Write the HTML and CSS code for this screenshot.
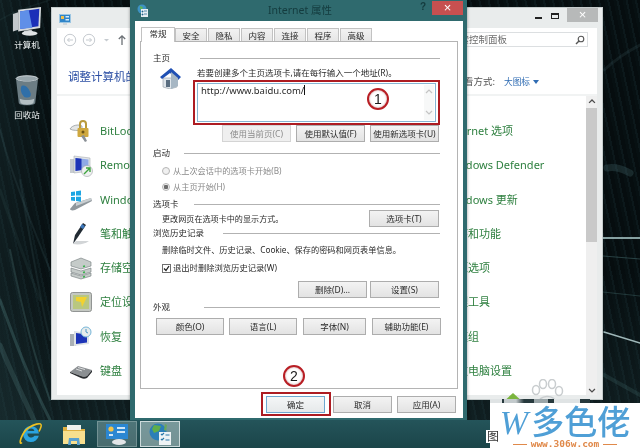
FILE: index.html
```html
<!DOCTYPE html>
<html lang="zh-CN">
<head>
<meta charset="utf-8">
<title>Internet 属性</title>
<link rel="stylesheet" href="styles.css">
</head>
<body>
<div class="desktop">
  <svg class="wallpaper" viewBox="0 0 640 448" aria-hidden="true">
    <g fill="none" stroke="#5b8a8c" stroke-linecap="round">
      <path d="M0 300C15 340 25 370 50 420" stroke-width="3" opacity=".3"/>
      <path d="M0 345C10 370 22 395 34 420" stroke-width="5" opacity=".24"/>
      <path d="M10 250C20 300 35 360 50 400" stroke-width="2" opacity=".25"/>
      <path d="M20 180C30 240 40 300 50 340" stroke-width="2" opacity=".14"/>
      <path d="M0 130C10 170 30 220 50 270" stroke-width="2" opacity=".14"/>
      <path d="M0 190C10 220 25 260 40 300" stroke-width="3" opacity=".1"/>
      <path d="M0 20C15 10 35 5 50 0" stroke-width="1.5" opacity=".1"/>
      <path d="M603 238H640" stroke="#a6c6c6" stroke-width="2" opacity=".8"/>
      <path d="M603 256L640 259" stroke-width="1" opacity=".4"/>
      <path d="M603 292L640 296" stroke-width="1" opacity=".3"/>
      <path d="M604 332L640 343" stroke="#b9d2d4" stroke-width="1.5" opacity=".85"/>
      <path d="M607 168C615 166 625 170 630 173" stroke-width="7" opacity=".22"/>
      <path d="M604 70C615 60 630 50 640 45" stroke-width="3" opacity=".14"/>
      <path d="M604 375L640 395" stroke-width="4" opacity=".18"/>
    </g>
  </svg>

  <div class="shortcut shortcut-computer">
    <svg width="30" height="29" viewBox="0 0 34 33" aria-hidden="true">
      <path d="M1 8l6-2v20l-6 2z" fill="#c3c8cc"/>
      <path d="M7 3l26-3-1 24-25 4z" fill="#d4d8db"/>
      <path d="M9 5l22-3-1 20-21 3z" fill="#1b2fb8"/>
      <path d="M9 5l10-1.500 4 20-14 1.500z" fill="#5f8fe8"/>
      <path d="M14 27l8-1 3 4H12z" fill="#c6cacd"/>
      <ellipse cx="20" cy="30" rx="9" ry="2.600" fill="#dfe2e4"/>
    </svg>
    <span>计算机</span>
  </div>
  <div class="shortcut shortcut-bin">
    <svg width="26" height="31" viewBox="0 0 28 34" aria-hidden="true">
      <ellipse cx="14" cy="4" rx="12" ry="3.200" fill="#98a6ac" stroke="#d7dde0"/>
      <path d="M2 5l3 26c2 3 16 3 18 0l3-26c-4 3-20 3-24 0z" fill="#6c7d84"/>
      <path d="M8 12c5-2 8 3 10 8 1 4-2 6-7 4-3-3-5-8-3-12z" fill="#2f6fa8"/>
      <path d="M6 26c4 2 12 2 16 0l-1 5c-3 2-11 2-14 0z" fill="#b5c0c4"/>
    </svg>
    <span>回收站</span>
  </div>

  <section class="panel-window">
    <header class="panel-title">
      <svg class="panel-title-icon" width="12" height="11" viewBox="0 0 12 11" aria-hidden="true">
        <rect x=".5" y=".5" width="11" height="8" fill="#2f85c9" stroke="#9cc6e2"/>
        <rect x="2" y="2" width="3" height="3" fill="#f2c14e"/>
        <rect x="6.500" y="2" width="3.500" height="1.500" fill="#d8ecf8"/>
        <rect x="6.500" y="5" width="3.500" height="1.500" fill="#d8ecf8"/>
        <path d="M4 9h4v2H4z" fill="#cfd6da"/>
      </svg>
      <div class="window-controls">
        <span class="ctl-min"></span>
        <span class="ctl-max"></span>
        <span class="ctl-close">×</span>
      </div>
    </header>
    <div class="panel-client">
      <div class="address-row">
        <svg class="nav-icons" width="68" height="14" viewBox="0 0 68 14" aria-hidden="true">
          <g fill="none" stroke="#c6cbd0">
            <circle cx="7" cy="7" r="5.700"/>
            <circle cx="26" cy="7" r="5.700"/>
            <path d="M10 7H4.500M6.500 5L4.500 7l2 2M23 7h5.500M26.500 5l2 2-2 2"/>
          </g>
          <path d="M41 6h5l-2.500 2.500z" fill="#c6cbd0"/>
          <path d="M59 12V3M55.800 6L59 2.800 62.200 6" fill="none" stroke="#6c7176" stroke-width="1.300"/>
        </svg>
        <div class="search-box">
          <span>搜索控制面板</span>
          <svg width="10" height="10" viewBox="0 0 10 10" aria-hidden="true">
            <circle cx="6" cy="4" r="2.800" fill="none" stroke="#555" stroke-width="1.100"/>
            <path d="M4 6L1 9" stroke="#555" stroke-width="1.400"/>
          </svg>
        </div>
      </div>
      <div class="heading-row">
        <h1>调整计算机的设置</h1>
        <div class="view-mode">查看方式:<b>大图标</b><i></i></div>
      </div>
      <div class="panel-body">
        <div class="item-grid">
          <div class="item">
            <svg width="24" height="24" viewBox="0 0 24 24" aria-hidden="true">
              <path d="M1 10c2-4 9-5 12-3v5c-4-1-9 0-12-2z" fill="#e4e6e6" stroke="#8b9094" stroke-width=".7"/>
              <path d="M10 5a4 4 0 0 1 8 0v5h-2V5a2 2 0 0 0-4 0v5h-2z" fill="#b99a3d"/>
              <rect x="8.500" y="9" width="11" height="9" rx="1" fill="#cfa83f"/>
              <path d="M12 17l4 6 2-1-3-6z" fill="#8a9096"/>
              <circle cx="14" cy="13" r="1.500" fill="#6d5516"/>
            </svg>
            <span>BitLocker 驱动器加密</span>
          </div>
          <div class="item"><span>Internet 选项</span></div>
          <div class="item">
            <svg width="24" height="24" viewBox="0 0 24 24" aria-hidden="true">
              <rect x="1" y="6" width="6" height="14" fill="#c7ccd0"/>
              <path d="M5 3l16 2v13l-16 2z" fill="#e2e5e8" stroke="#a9afb4" stroke-width=".6"/>
              <path d="M6.500 5l13 1.500V16l-13 2z" fill="#8fa9e6"/>
              <path d="M6.500 5l6 .7V17l-6 1z" fill="#1d34b7"/>
              <circle cx="18" cy="18" r="5.500" fill="#eef0f0" stroke="#9da3a8" stroke-width=".6"/>
              <path d="M15 21l6-6M17 15h4v4" fill="none" stroke="#3da33d" stroke-width="1.400"/>
            </svg>
            <span>RemoteApp 和桌面连接</span>
          </div>
          <div class="item"><span>Windows Defender</span></div>
          <div class="item">
            <svg width="24" height="24" viewBox="0 0 24 24" aria-hidden="true">
              <path d="M1 21l5-6 16-5 1 3-17 9c-3 1-5 0-5-1z" fill="#8f979c"/>
              <path d="M7 15l15-5 1 2-16 6z" fill="#c9cfd2"/>
              <path d="M2 4l4-.6v4L2 8zM7 3.200l5-.7v5L7 7.500zM2 9l4 0v4l-4-.5zM7 8.700h5v5l-5-.7z" fill="#1ea6e3"/>
            </svg>
            <span>Windows To Go</span>
          </div>
          <div class="item"><span>Windows 更新</span></div>
          <div class="item">
            <svg width="24" height="24" viewBox="0 0 24 24" aria-hidden="true">
              <path d="M4 22l2-9 8-12 3 2-8 12z" fill="#222b33"/>
              <path d="M13 2l3 2-2 3-3-2z" fill="#3d78bc"/>
              <path d="M4 22l3-3 13 0c-4 3-10 4-16 3z" fill="#bfc3c6" opacity=".7"/>
            </svg>
            <span>笔和触摸</span>
          </div>
          <div class="item"><span>程序和功能</span></div>
          <div class="item">
            <svg width="24" height="24" viewBox="0 0 24 24" aria-hidden="true">
              <g fill="#c5cbc9" stroke="#70787a" stroke-width=".6">
                <path d="M2 6l10-4 10 4v4l-10 3-10-3z"/>
                <path d="M2 12l10 3 10-3v4l-10 3-10-3z"/>
                <path d="M2 17l10 3 10-3v3l-10 3-10-3z"/>
              </g>
              <path d="M14 10.500l2-.5M14 16.500l2-.5M14 21l2-.5" stroke="#36b24a" stroke-width="1.500"/>
            </svg>
            <span>存储空间</span>
          </div>
          <div class="item"><span>电源选项</span></div>
          <div class="item">
            <svg width="24" height="24" viewBox="0 0 24 24" aria-hidden="true">
              <rect x="1.500" y="2.500" width="21" height="19" rx="2" fill="#c4c8c2" stroke="#7d8280" stroke-width=".8"/>
              <rect x="4" y="5" width="16" height="14" fill="#b9c780"/>
              <path d="M7 7h11l-5 10-1-5-5-1z" fill="#f2d230"/>
            </svg>
            <span>定位设置</span>
          </div>
          <div class="item"><span>管理工具</span></div>
          <div class="item">
            <svg width="24" height="24" viewBox="0 0 24 24" aria-hidden="true">
              <rect x="1" y="9" width="6" height="12" fill="#aab0b5"/>
              <path d="M5 6l15 2v11L5 21z" fill="#dfe3e6"/>
              <path d="M7 8l11 1.500v8L7 19z" fill="#1d34b7"/>
              <circle cx="17" cy="7" r="5" fill="#e7ecec" stroke="#77b6d9"/>
              <path d="M17 4v3l2 1" fill="none" stroke="#4d97c4"/>
            </svg>
            <span>恢复</span>
          </div>
          <div class="item"><span>家庭组</span></div>
          <div class="item">
            <svg width="24" height="24" viewBox="0 0 24 24" aria-hidden="true">
              <path d="M1 13l8-6 14 4-5 6c-2 1-4 1-6 0z" fill="#8b8f92"/>
              <path d="M1 13l11 4c2 1 4 1 6 0l5-6v2l-5 6c-2 1-4 1-6 0L1 14z" fill="#2a2d30"/>
              <path d="M7 10l6 2M9 8.500l7 2" stroke="#d8dadb" stroke-width="1"/>
            </svg>
            <span>键盘</span>
          </div>
          <div class="item"><span>更改电脑设置</span></div>
        </div>
        <div class="scrollbar">
          <svg width="10" height="10" viewBox="0 0 10 10" aria-hidden="true"><path d="M2 6l3-3 3 3" fill="none" stroke="#4d4d4d" stroke-width="1.300"/></svg>
          <div class="scroll-thumb"></div>
          <svg width="10" height="10" viewBox="0 0 10 10" aria-hidden="true"><path d="M2 4l3 3 3-3" fill="none" stroke="#4d4d4d" stroke-width="1.300"/></svg>
        </div>
      </div>
    </div>
  </section>

  <section class="dialog">
    <header class="dialog-title">
      <svg class="dialog-icon" width="11" height="13" viewBox="0 0 11 13" aria-hidden="true">
        <circle cx="5" cy="5" r="4.500" fill="#3d92c4"/>
        <path d="M3 2l3 1-1 3-2-1z" fill="#5bb35a"/>
        <rect x="4" y="5" width="7" height="8" fill="#e6eef2"/>
        <path d="M5 7h1v1H5zM5 10h1v1H5zM7 7h3M7 10h3" stroke="#2e6f99" stroke-width=".8"/>
      </svg>
      <span class="dialog-name">Internet 属性</span>
      <span class="dialog-help">?</span>
      <span class="dialog-close">×</span>
    </header>
    <div class="dialog-client">
      <nav class="tabs">
        <span class="tab tab-active">常规</span>
        <span class="tab">安全</span>
        <span class="tab">隐私</span>
        <span class="tab">内容</span>
        <span class="tab">连接</span>
        <span class="tab">程序</span>
        <span class="tab">高级</span>
      </nav>
      <div class="tab-panel">
        <div class="group-head gap-home"><span>主页</span><i></i></div>
        <div class="home-section">
          <svg class="home-icon" width="22" height="21" viewBox="0 0 22 21" aria-hidden="true">
            <path d="M3 10h14v9l-7 2-7-2z" fill="#dfe5ea" stroke="#7d8790" stroke-width=".5"/>
            <path d="M11 0l10 9-3 3-8-7-8 6-2-2z" fill="#2050b4"/>
            <path d="M11 4l7 6v8l-7 3z" fill="#a7b7c4"/>
            <rect x="6" y="12" width="4" height="7" fill="#5a6d80"/>
          </svg>
          <div class="home-main">
            <p class="home-text">若要创建多个主页选项卡,请在每行输入一个地址(R)。</p>
            <div class="highlight highlight-url">
              <div class="url-box">
                <span class="url-text">http://www.baidu.com/</span>
                <div class="url-scroll">
                  <svg width="8" height="6" viewBox="0 0 8 6" aria-hidden="true"><path d="M1 5l3-3 3 3" fill="none" stroke="#c4c4c4" stroke-width="1.200"/></svg>
                  <svg width="8" height="6" viewBox="0 0 8 6" aria-hidden="true"><path d="M1 1l3 3 3-3" fill="none" stroke="#c4c4c4" stroke-width="1.200"/></svg>
                </div>
              </div>
              <span class="callout callout-one">1</span>
            </div>
            <div class="btn-row home-buttons">
              <button class="btn btn-disabled">使用当前页(C)</button>
              <button class="btn">使用默认值(F)</button>
              <button class="btn">使用新选项卡(U)</button>
            </div>
          </div>
        </div>

        <div class="group-head gap-start"><span>启动</span><i></i></div>
        <div class="radio-list">
          <label class="radio-row"><i class="radio"></i>从上次会话中的选项卡开始(B)</label>
          <label class="radio-row"><i class="radio radio-on"></i>从主页开始(H)</label>
        </div>

        <div class="group-head gap-tabs"><span>选项卡</span><i></i></div>
        <div class="tab-row">
          <p>更改网页在选项卡中的显示方式。</p>
          <button class="btn btn-tab">选项卡(T)</button>
        </div>

        <div class="group-head gap-history"><span>浏览历史记录</span><i></i></div>
        <p class="history-text">删除临时文件、历史记录、Cookie、保存的密码和网页表单信息。</p>
        <label class="check-row">
          <svg width="9" height="9" viewBox="0 0 9 9" aria-hidden="true">
            <rect x=".5" y=".5" width="8" height="8" fill="#fff" stroke="#6f6f6f"/>
            <path d="M2 4.500l2 2L7 2" fill="none" stroke="#222" stroke-width="1.300"/>
          </svg>
          退出时删除浏览历史记录(W)
        </label>
        <div class="btn-row history-buttons">
          <button class="btn">删除(D)...</button>
          <button class="btn">设置(S)</button>
        </div>

        <div class="group-head gap-look"><span>外观</span><i></i></div>
        <div class="look-buttons">
          <button class="btn btn-look">颜色(O)</button>
          <button class="btn btn-look">语言(L)</button>
          <button class="btn btn-short">字体(N)</button>
          <button class="btn">辅助功能(E)</button>
        </div>
      </div>
      <footer class="dialog-foot">
        <div class="highlight highlight-ok">
          <button class="btn btn-wide btn-default">确定</button>
          <span class="callout callout-two">2</span>
        </div>
        <button class="btn btn-wide">取消</button>
        <button class="btn btn-wide">应用(A)</button>
      </footer>
    </div>
  </section>

  <footer class="taskbar">
    <div class="task-item task-plain">
      <svg width="24" height="24" viewBox="0 0 24 23" aria-hidden="true">
        <path d="M4 12a8 8 0 0 1 16-1H8.500a3.800 3.800 0 0 0 7 2.300h4.300A8 8 0 0 1 4 12zM8.800 8.500h6.700a3.500 3.500 0 0 0-6.700 0z" fill="#2aa3e0" fill-rule="evenodd"/>
        <path d="M3 20C-1 24 2 10 10 5c5-3 11-5 12-3 1 1-1 5-2 7" fill="none" stroke="#f0c020" stroke-width="1.600"/>
      </svg>
    </div>
    <div class="task-item task-plain">
      <svg width="24" height="23" viewBox="0 0 24 23" aria-hidden="true">
        <path d="M1 4h8l2 2h12v15H1z" fill="#e0b040"/>
        <path d="M1 8h22v13H1z" fill="#f8df8e"/>
        <path d="M5 2h14v5H5z" fill="#eef1ee"/>
        <path d="M6 22l1-7h10l1 7h-3v-4H9v4z" fill="#5aa0cf"/>
      </svg>
    </div>
    <div class="task-item task-open">
      <svg width="24" height="22" viewBox="0 0 24 22" aria-hidden="true">
        <rect x="1" y="1" width="22" height="15" fill="#2b87d2"/>
        <circle cx="6" cy="6" r="2.600" fill="#f3c44b"/>
        <path d="M12 4h8v2h-8zM12 8h8v2h-8zM4 11h4v2H4z" fill="#cfe6f6"/>
        <ellipse cx="14" cy="19" rx="7" ry="3" fill="#e3e6e8"/>
      </svg>
    </div>
    <div class="task-item task-active">
      <svg width="24" height="23" viewBox="0 0 24 23" aria-hidden="true">
        <circle cx="10" cy="9" r="8.500" fill="#2c7fb8"/>
        <path d="M6 2l7 1-2 5-5 2-2-4z" fill="#5fae4b"/>
        <path d="M17 1l2 1-1 6-2-1z" fill="#6aa95a"/>
        <rect x="11" y="9" width="12" height="13" fill="#eef3f5"/>
        <path d="M13 11l1 1 2-2M13 16l1 1 2-2M17.500 12h4M17.500 17h4" fill="none" stroke="#2877a8" stroke-width="1.200"/>
      </svg>
    </div>
  </footer>

  <div class="watermark">
    <svg class="paw" width="36" height="26" viewBox="0 0 36 26" aria-hidden="true">
      <g fill="none" stroke="#c9cdcf" stroke-width="1.500">
        <ellipse cx="8" cy="11" rx="3.500" ry="4.500"/>
        <ellipse cx="15" cy="5" rx="3.500" ry="4.500"/>
        <ellipse cx="24" cy="5" rx="3.500" ry="4.500"/>
        <ellipse cx="31" cy="12" rx="3.500" ry="4.500"/>
        <path d="M10 24c2-8 15-9 18-1v3H10z"/>
      </g>
    </svg>
    <i class="wm-tri"></i>
    <i class="wm-strip"></i>
    <div class="wm-card">
      <div class="wm-name"><span class="wm-w">W</span>多色佬</div>
      <div class="wm-url"><i></i>www.306w.com<i></i></div>
    </div>
    <span class="wm-tag">图</span>
  </div>
</div>
</body>
</html>
```

FILE: styles.css
```css
* { box-sizing: border-box; }
html, body { margin: 0; padding: 0; }
body { width: 640px; height: 448px; overflow: hidden; background: #060d0f; }
p, h1 { margin: 0; font-weight: normal; }
button { font: inherit; padding: 0; }

.desktop {
  position: relative;
  width: 640px;
  height: 448px;
  overflow: hidden;
  font-family: "Noto Sans", "Noto Sans CJK SC", sans-serif;
  font-size: 8.5px;
  line-height: 12px;
  color: #2b2b2b;
  background:
    linear-gradient(180deg, rgba(10, 20, 22, 0) 60%, rgba(44, 78, 82, .3) 100%),
    linear-gradient(90deg, rgba(40, 70, 74, .28), rgba(0, 0, 0, 0) 55px),
    repeating-linear-gradient(78deg, #071012 0 3px, #0c181b 3px 5px, #060d0f 5px 9px);
  filter: blur(.35px);
}
.wallpaper { position: absolute; inset: 0; width: 640px; height: 448px; }

.shortcut {
  position: absolute;
  left: 5px;
  width: 44px;
  display: flex;
  flex-direction: column;
  align-items: center;
  color: #eef2f2;
  font-size: 8.5px;
  line-height: 12px;
  gap: 3px;
}
.shortcut-computer { top: 7px; }
.shortcut-bin { top: 75px; gap: 3px; }

/* control panel window */
.panel-window {
  position: absolute;
  left: 51px;
  top: 7px;
  width: 552px;
  height: 393px;
  background: #e9ecec;
  border: 1px solid #c5cbcb;
  display: flex;
  flex-direction: column;
}
.panel-title { height: 20px; display: flex; justify-content: space-between; flex: none; }
.panel-title-icon { margin: 6px 0 0 7px; }
.window-controls { display: flex; align-items: flex-start; margin-right: 4px; }
.ctl-min { width: 7px; height: 2px; margin: 9px 9px 0 0; background: #222; }
.ctl-max { width: 8px; height: 6px; margin: 5px 8px 0 0; border: 1px solid #222; border-top-width: 2px; }
.ctl-close {
  width: 31px;
  height: 14px;
  background: #b7b9b9;
  color: #fff;
  text-align: center;
  font: 13px/13px "Liberation Sans", sans-serif;
}
.panel-client {
  flex: 1;
  margin: 0 5px 4px;
  background: #fff;
  display: flex;
  flex-direction: column;
  min-height: 0;
}
.address-row { height: 28px; display: flex; justify-content: space-between; align-items: center; padding: 0 9px 5px 6px; flex: none; }
.search-box {
  width: 150px;
  height: 15px;
  border: 1px solid #dcdfe1;
  display: flex;
  align-items: center;
  justify-content: space-between;
  padding: 0 2px 0 11px;
  font-size: 9.5px;
  color: #6d6d6d;
}
.heading-row { height: 40px; display: flex; justify-content: space-between; padding: 13px 58px 0 11px; flex: none; border-bottom: 2px solid #f1f3f3; }
h1 { font-size: 11.5px; line-height: 16px; color: #2b4ea3; }
.view-mode { font-size: 9.5px; line-height: 16px; color: #555; display: flex; align-items: center; }
.view-mode b { font-weight: normal; font-size: 8.7px; color: #2f6cb3; margin-left: 9px; }
.view-mode i { border: 3px solid transparent; border-top: 4px solid #2f6cb3; border-bottom: 0; margin-left: 3px; }
.panel-body { flex: 1; display: flex; min-height: 0; }
.item-grid {
  flex: 1;
  display: grid;
  grid-template-columns: 377px 1fr;
  grid-auto-rows: 34.3px;
  padding: 18px 0 0 12px;
}
.item { display: flex; align-items: center; gap: 7px; height: 34px; font-size: 11px; line-height: 14px; color: #2f8040; white-space: nowrap; }
.scrollbar {
  width: 11px;
  flex: none;
  background: #efefef;
  display: flex;
  flex-direction: column;
  align-items: center;
  padding-top: 1px;
}
.scroll-thumb { width: 11px; height: 137px; margin: 1px 0 143px; background: #c9c9c9; }

/* dialog */
.dialog {
  position: absolute;
  left: 130px;
  top: 0;
  width: 337px;
  height: 423px;
  background: #2f6a6e;
  display: flex;
  flex-direction: column;
  box-shadow: 0 0 3px rgba(0, 0, 0, .4);
}
.dialog-title { position: relative; height: 21px; flex: none; display: flex; align-items: flex-start; }
.dialog-icon { margin: 4px 0 0 7px; }
.dialog-name {
  position: absolute;
  left: 138px;
  top: 3px;
  font-size: 10.5px;
  line-height: 14px;
  color: #143b3e;
}
.dialog-help { position: absolute; left: 290px; top: 1px; font: bold 10px/12px "Liberation Sans", sans-serif; color: #143b3e; }
.dialog-close {
  position: absolute;
  left: 302px;
  top: 1px;
  width: 31px;
  height: 14px;
  background: #c75050;
  color: #fff;
  text-align: center;
  font: 13px/14px "Liberation Sans", sans-serif;
}
.dialog-client {
  flex: none;
  height: 397px;
  margin: 0 4px 0 5px;
  padding: 6px 5px 0 5px;
  display: flex;
  flex-direction: column;
  background: #fff;
}
.tabs { display: flex; height: 14px; flex: none; padding-left: 1px; align-items: flex-end; gap: 1px; position: relative; z-index: 1; }
.tab {
  width: 32px;
  height: 13px;
  border: 1px solid #c2c2c2;
  border-bottom: 0;
  background: linear-gradient(#f2f2f2, #e6e6e6);
  text-align: center;
  line-height: 13px;
}
.tab-active { width: 34px; height: 15px; margin-bottom: -1px; margin-right: -1px; background: #fff; line-height: 12px; }
.tab-panel {
  height: 348px;
  flex: none;
  border: 1px solid #b4b4b4;
  padding: 10px 17px 0 12px;
}
.group-head { display: flex; align-items: center; height: 12px; line-height: 12px; }
.group-head i { flex: 1; height: 1px; background: #b2b2b2; }
.gap-home span { margin-right: 30px; }
.gap-start { margin-top: 5px; }
.gap-start span { margin-right: 14px; }
.gap-tabs { margin-top: 3px; }
.gap-tabs span { margin-right: 15px; }
.gap-history span { margin-right: 19px; }
.gap-look { margin-top: 3px; }
.gap-look span { margin-right: 34px; }

.home-section { display: flex; margin-top: 2px; margin-left: 7px; }
.home-icon { flex: none; margin: 2px 11px 0 0; }
.home-main { width: 248px; }
.home-text { height: 14px; line-height: 14px; padding-left: 4px; white-space: nowrap; }
.highlight { position: relative; border: 2px solid #ad1c22; }
.highlight-url { height: 45px; padding: 1px 2px; }
.url-box {
  height: 39px;
  border: 1px solid #85b5d2;
  background: #fff;
  display: flex;
  justify-content: space-between;
  padding: 1px 1px 1px 3px;
}
.url-text { font-size: 9.5px; line-height: 12px; }
.url-text::after { content: ""; display: inline-block; width: 1px; height: 10px; background: #111; vertical-align: -1px; }
.url-scroll { width: 10px; display: flex; flex-direction: column; justify-content: space-between; align-items: center; padding: 3px 0 4px; background: #f7f8f8; }
.callout {
  position: absolute;
  width: 22px;
  height: 22px;
  border-radius: 50%;
  background: #fff;
  border: 2px solid #b81e24;
  box-shadow: inset 0 0 2px rgba(120, 0, 0, .5);
  color: #1a1a1a;
  font: 14px/18px "Liberation Sans", sans-serif;
  text-align: center;
}
.callout-one { left: 172px; top: 6px; }
.callout-two { left: 20px; top: -29px; }

.btn {
  width: 69px;
  height: 17px;
  border: 1px solid #adadad;
  background: linear-gradient(#f3f3f3, #e3e3e3);
  color: #2b2b2b;
  line-height: 14px;
  text-align: center;
  white-space: nowrap;
  font-size: 8.5px;
}
.btn-disabled { background: #efefef; border-color: #d4d4d4; color: #8c8c8c; }
.btn-row { display: flex; justify-content: flex-end; gap: 5px; padding-right: 1px; }
.radio-list { margin-top: 4px; padding-left: 9px; color: #8a8a8a; font-size: 8.2px; }
.radio-row { display: flex; align-items: center; height: 16px; gap: 3px; }
.radio { width: 8px; height: 8px; border-radius: 50%; border: 1px solid #b5b5b5; background: #f0f0f0; flex: none; }
.radio-on { background: radial-gradient(circle, #6d6d6d 0 2px, #f0f0f0 2.5px); }
.tab-row { display: flex; justify-content: space-between; align-items: center; height: 17px; padding-left: 9px; font-size: 8.1px; }
.tab-row p { line-height: 12px; margin-top: 1px; }
.btn-tab { width: 70px; margin-right: 1px; }
.history-text { height: 14px; line-height: 14px; margin-top: 4px; padding-left: 9px; white-space: nowrap; font-size: 8.2px; }
.check-row { display: flex; align-items: center; gap: 2px; height: 14px; margin-top: 4px; padding-left: 9px; font-size: 8.3px; }
.history-buttons { margin-top: 6px; gap: 3px; }
.look-buttons { display: flex; gap: 5px; margin-top: 5px; padding-left: 3px; margin-right: -2px; }
.btn-look { width: 68px; }
.btn-short { width: 63px; margin-left: 1px; margin-right: 1px; }
.dialog-foot { flex: 1; display: flex; align-items: flex-start; gap: 5px; padding: 3px 2px 0 123px; margin: 0 -2px; }
.highlight-ok { width: 70px; height: 24px; padding: 2px 3px; margin-right: -3px; flex: none; }
.btn-wide { width: 59px; margin-top: 4px; flex: none; }
.highlight-ok .btn-wide { margin-top: 0; }
.btn-default { border-color: #6fa8d0; background: linear-gradient(#f4f6f7, #e6e9ea); }

/* taskbar */
.taskbar {
  position: absolute;
  left: 0;
  right: 0;
  bottom: 0;
  height: 28px;
  padding-left: 11px;
  background: linear-gradient(180deg, #24545a, #1b4549);
  display: flex;
  gap: 3px;
  align-items: center;
}
.task-item { width: 40px; height: 26px; display: flex; align-items: center; justify-content: center; flex: none; }
.task-open { background: rgba(170, 190, 190, .32); border: 1px solid rgba(190, 210, 210, .35); }
.task-active { background: rgba(190, 210, 210, .55); border: 1px solid rgba(225, 235, 235, .8); }

/* watermark */
.watermark { position: absolute; right: 0; bottom: 0; width: 150px; height: 45px; }
.paw { position: absolute; left: 38px; top: -24px; }
.wm-tri { position: absolute; left: 12px; top: -10px; border: 11px solid transparent; border-top: 0; border-bottom: 10px solid #7bb53e; }
.wm-strip {
  position: absolute;
  left: 0;
  top: -4px;
  width: 100px;
  height: 4px;
  background: linear-gradient(90deg, #dfe3e4 0 12px, #27393d 12px 14px, #c3cacc 14px 26px, #27393d 34px 44px, #9aa5a8 44px 58px, #27393d 58px 64px, #dfe3e4 64px 90px, #27393d 90px);
}
.wm-card { position: absolute; inset: 0; background: #fff; text-align: center; padding-top: 1px; }
.wm-name { font: 500 33px/33px "Noto Sans CJK SC", sans-serif; color: #4f9fd6; white-space: nowrap; }
.wm-w { font-family: "Liberation Serif", serif; font-style: italic; margin-right: 3px; font-size: 34px; }
.wm-url { display: flex; align-items: center; justify-content: center; gap: 4px; font: bold 9.5px/10px "DejaVu Sans Mono", monospace; color: #e0894a; white-space: nowrap; }
.wm-url i { width: 14px; height: 1px; background: #e0894a; }
.wm-tag { position: absolute; left: -4px; top: 27px; width: 14px; font-size: 12px; line-height: 13px; color: #333; background: #fff; text-align: center; }
```
